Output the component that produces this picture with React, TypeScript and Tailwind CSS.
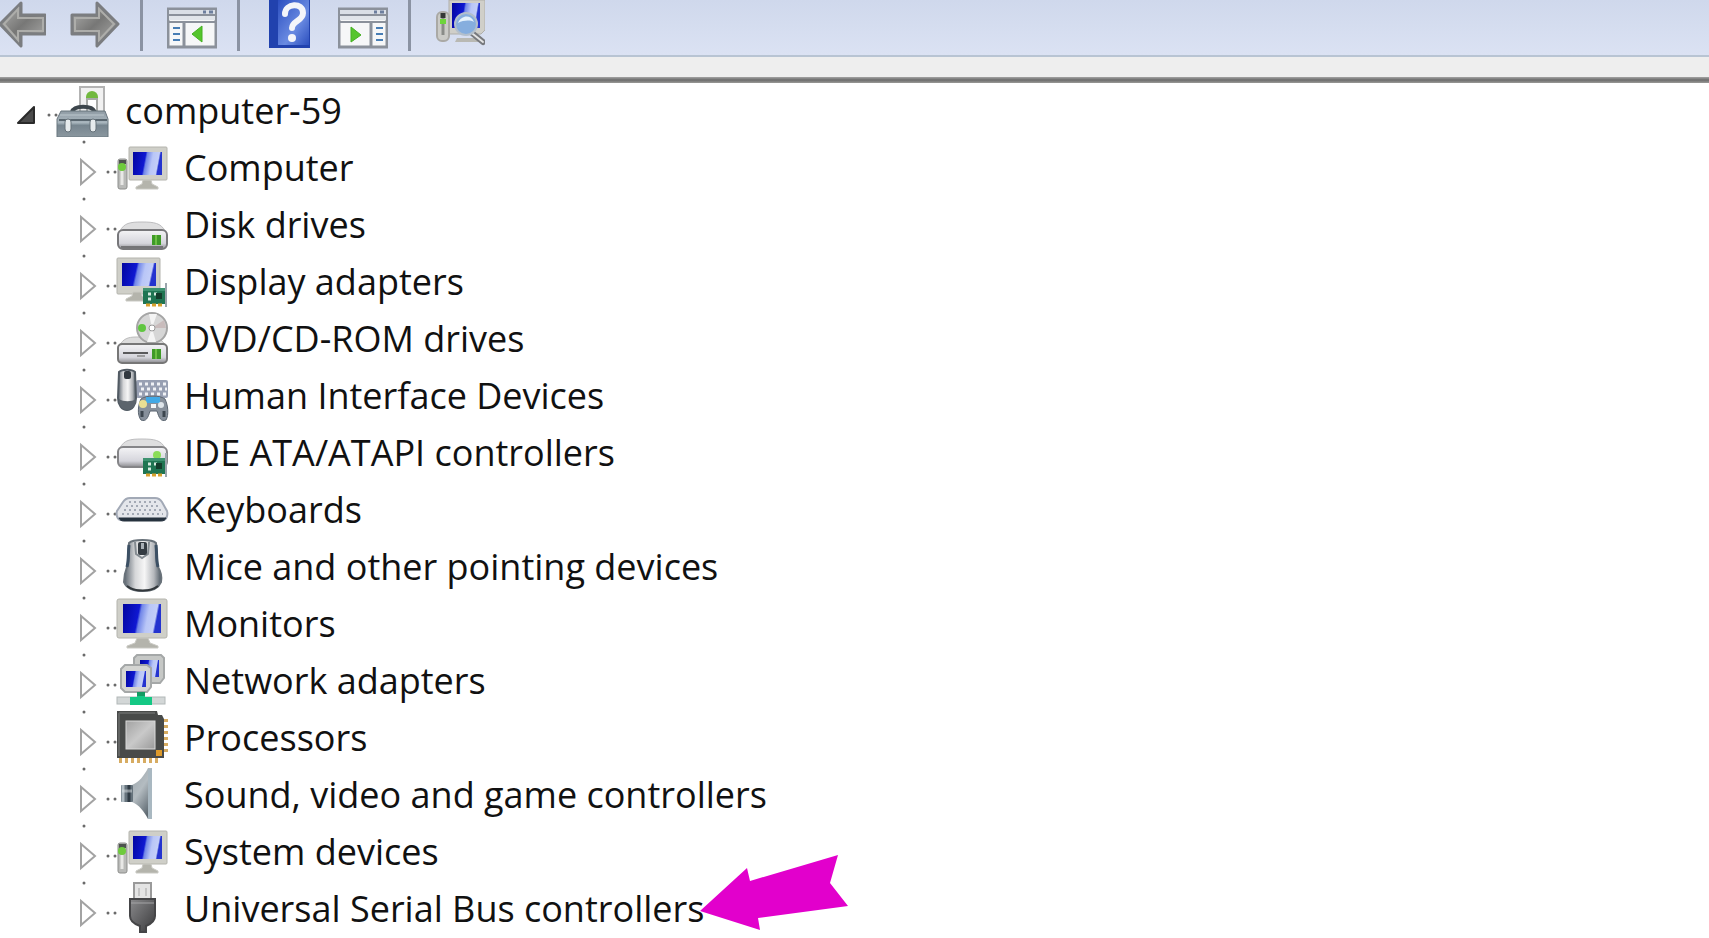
import { useState } from "react";
import type { ReactNode } from "react";

const Gradients = () => (
  <svg className="absolute h-0 w-0" aria-hidden="true">
    <defs>
      <linearGradient id="screen" x1="0" y1="0" x2="1" y2="0.15">
        <stop offset="0" stopColor="#0206a0" />
        <stop offset="0.44" stopColor="#0f18d2" />
        <stop offset="0.5" stopColor="#7186e8" />
        <stop offset="0.7" stopColor="#b9c6f7" />
        <stop offset="0.9" stopColor="#c3cef8" />
        <stop offset="0.95" stopColor="#2433cf" />
      </linearGradient>
      <linearGradient id="arrow" x1="0" y1="0" x2="1" y2="1">
        <stop offset="0" stopColor="#b5b5b3" />
        <stop offset="0.5" stopColor="#777776" />
        <stop offset="1" stopColor="#b0b0ae" />
      </linearGradient>
      <linearGradient id="steel" x1="0" y1="0" x2="0" y2="1">
        <stop offset="0" stopColor="#8f9ba4" />
        <stop offset="0.45" stopColor="#a9b6be" />
        <stop offset="0.55" stopColor="#76858f" />
        <stop offset="1" stopColor="#8b979f" />
      </linearGradient>
      <linearGradient id="drive" x1="0" y1="0" x2="0" y2="1">
        <stop offset="0" stopColor="#f4f4f6" />
        <stop offset="0.7" stopColor="#d5d5dc" />
        <stop offset="1" stopColor="#8c8c90" />
      </linearGradient>
      <linearGradient id="mouse" x1="0" y1="0" x2="1" y2="0">
        <stop offset="0" stopColor="#59636d" />
        <stop offset="0.3" stopColor="#d6d7d9" />
        <stop offset="0.55" stopColor="#f6f6f6" />
        <stop offset="0.8" stopColor="#b5b8bc" />
        <stop offset="1" stopColor="#4d5862" />
      </linearGradient>
      <linearGradient id="die" x1="0" y1="0" x2="1" y2="1">
        <stop offset="0" stopColor="#a2a2a2" />
        <stop offset="0.5" stopColor="#c9c9c9" />
        <stop offset="1" stopColor="#9a9a9a" />
      </linearGradient>
      <linearGradient id="cone" x1="0" y1="0" x2="0.6" y2="1">
        <stop offset="0" stopColor="#9aa4aa" />
        <stop offset="0.5" stopColor="#b4bcc1" />
        <stop offset="1" stopColor="#5f6a72" />
      </linearGradient>
      <linearGradient id="plug" x1="0" y1="0" x2="1" y2="1">
        <stop offset="0" stopColor="#8a8a8c" />
        <stop offset="1" stopColor="#3a3a3c" />
      </linearGradient>
      <linearGradient id="book" x1="0" y1="0" x2="1" y2="1">
        <stop offset="0" stopColor="#2c4fc0" />
        <stop offset="0.6" stopColor="#6a8be2" />
        <stop offset="1" stopColor="#2c4fbe" />
      </linearGradient>
    </defs>
  </svg>
);

const Icon = ({ children }: { children: ReactNode }) => (
  <svg viewBox="0 0 54 54" className="h-[54px] w-[54px] -mr-px shrink-0" aria-hidden="true">
    {children}
  </svg>
);

const Stand = ({ x, y }: { x: number; y: number }) => (
  <path
    d={`M${x - 4} ${y}h8l1 4 6 3v2h-22v-2l6-3z`}
    fill="#b4b4ac"
    stroke="#c9c9c3"
  />
);

const Board = ({ y }: { y: number }) => (
  <g>
    <path d={`M51 ${y - 5}v24`} stroke="#9aa5ac" strokeWidth="2" />
    <rect x="28" y={y} width="22" height="16" fill="#1f7552" />
    <rect x="28" y={y} width="22" height="3" fill="#3d9270" />
    <path d={`M33 ${y + 6}h3M33 ${y + 11}h3M39 ${y + 6}h3`} stroke="#d5eadf" strokeWidth="3" />
    <rect x="41" y={y + 5} width="6" height="6" fill="#143d2c" />
    <path d={`M31 ${y + 17}h16`} stroke="#d9a12e" strokeWidth="3" strokeDasharray="4 2" />
  </g>
);

const DeviceRootIcon = () => (
  <Icon>
    <rect x="24" y="4" width="24" height="26" fill="#f1f1f1" stroke="#b3b3b3" strokeWidth="2" />
    <path d="M30 14a6 6 0 0 1 12 0v2H30z" fill="#72b93f" />
    <path d="M31 16h10v14H31z" fill="#fff" stroke="#a8aaa8" strokeWidth="2" />
    <path d="M16 29c2-7 20-7 23 0" fill="none" stroke="#3d464c" strokeWidth="4" />
    <path d="M5 28h44l3 8v18H1V36z" fill="url(#steel)" stroke="#69767f" />
    <path d="M3 37h48" stroke="#59666f" strokeWidth="2" />
    <path d="M4 32h44" stroke="#bbc6cc" />
    <rect x="9" y="36" width="6" height="13" rx="3" fill="#e6ebed" stroke="#66727a" />
    <rect x="34" y="36" width="6" height="13" rx="3" fill="#e6ebed" stroke="#66727a" />
  </Icon>
);

const ComputerIcon = () => (
  <Icon>
    <rect x="3" y="19" width="9" height="30" rx="2" fill="#b9bab8" stroke="#8d8e8c" />
    <rect x="4" y="20" width="7" height="4" fill="#4d534e" />
    <ellipse cx="7" cy="27" rx="4" ry="4" fill="#6ecb3c" />
    <path d="M7 31v14" stroke="#e8e8e6" strokeWidth="3" />
    <rect x="14" y="7" width="38" height="33" rx="1" fill="#cfcfc8" stroke="#b4b4ad" />
    <rect x="18" y="12" width="29" height="23" fill="url(#screen)" />
    <Stand x={32} y={40} />
  </Icon>
);

const DiskIcon = () => (
  <Icon>
    <path d="M5 34c4-8 10-9 22-9s19 1 23 9z" fill="#dededf" stroke="#bdbdbf" />
    <rect x="3" y="33" width="49" height="19" rx="5" fill="url(#drive)" stroke="#77777a" strokeWidth="2" />
    <path d="M6 50h42" stroke="#747477" strokeWidth="2" />
    <rect x="37" y="38" width="9" height="10" fill="#3f9a27" />
    <path d="M41 38v10" stroke="#6cc043" strokeWidth="2" />
  </Icon>
);

const DisplayIcon = () => (
  <Icon>
    <rect x="2" y="4" width="43" height="36" rx="1" fill="#cfcfc8" stroke="#b4b4ad" />
    <rect x="7" y="9" width="34" height="23" fill="url(#screen)" />
    <Stand x={22} y={38} />
    <Board y={34} />
  </Icon>
);

const DvdIcon = () => (
  <Icon>
    <path d="M5 34c3-6 8-8 16-8h12c8 0 14 2 17 8z" fill="#dcdcdc" stroke="#bbb" />
    <circle cx="37" cy="17" r="15" fill="#d6d6d6" stroke="#a5a5a5" strokeWidth="2" />
    <path d="M37 17L34 3h8zM37 17l4 14h-9z" fill="#f4f4f4" />
    <path d="M37 17L49 9l2 8z" fill="#c9bcbc" />
    <circle cx="27" cy="17" r="4" fill="#60c640" />
    <circle cx="37" cy="17" r="3" fill="#fff" stroke="#999" />
    <rect x="3" y="33" width="49" height="19" rx="4" fill="url(#drive)" stroke="#777" strokeWidth="2" />
    <path d="M8 42h25" stroke="#5a5a5c" strokeWidth="2" />
    <path d="M22 45h8" stroke="#9c9c9e" strokeWidth="2" />
    <rect x="37" y="38" width="9" height="10" fill="#3f9a27" />
    <path d="M41 38v10" stroke="#6cc043" strokeWidth="2" />
  </Icon>
);

const HidIcon = () => (
  <Icon>
    <rect x="21" y="12" width="32" height="18" rx="2" fill="#98a0b3" />
    <path d="M24 16h27M26 21h26M24 26h27" stroke="#f0f2f6" strokeWidth="3" strokeDasharray="3 3" />
    <path d="M4 4c3-3 13-3 16 0l1 26c0 7-4 12-9 12S3 37 3 30z" fill="url(#mouse)" stroke="#515a63" strokeWidth="2" />
    <path d="M4 31c4 3 13 3 17 0 0 7-4 11-9 11s-8-4-8-11z" fill="#5c646c" />
    <rect x="9" y="3" width="7" height="8" rx="2" fill="#323940" />
    <path d="M26 31c5-4 19-4 24 0 3 6 4 16 1 21-5 2-7-2-9-9h-7c-2 7-4 11-9 9-4-5-3-15 0-21z" fill="#87909b" stroke="#5b6570" />
    <rect x="31" y="29" width="14" height="6" fill="#42a9e6" />
    <circle cx="28" cy="36" r="4" fill="#eadf93" />
    <circle cx="46" cy="37" r="3" fill="#dfe5ea" />
    <path d="M27 43v6M49 43v6" stroke="#3d464f" strokeWidth="3" />
    <path d="M36 38h5" stroke="#f4f6f7" strokeWidth="4" />
  </Icon>
);

const IdeIcon = () => (
  <Icon>
    <path d="M5 23c4-8 10-9 22-9s19 1 23 9z" fill="#dededf" stroke="#bdbdbf" />
    <rect x="3" y="22" width="49" height="20" rx="5" fill="url(#drive)" stroke="#858588" strokeWidth="2" />
    <circle cx="42" cy="30" r="4" fill="#8bdc58" />
    <Board y={33} />
  </Icon>
);

const KeyboardIcon = () => (
  <Icon>
    <path
      d="M15 16h25c3 0 5 1 7 4l5 9c1 3 0 9-4 9H6c-4 0-5-6-4-9l6-9c2-3 4-4 7-4z"
      fill="#e4e6eb"
      stroke="#a2a9b6"
      strokeWidth="2"
    />
    <path d="M14 20h28M11 24h33M9 28h38M7 32h41" stroke="#a3a9b5" strokeWidth="2" strokeDasharray="2 3" />
    <path d="M4 36h47c-1 2-2 3-5 3H9c-3 0-4-1-5-3z" fill="#26323f" stroke="#26323f" />
  </Icon>
);

const MouseIcon = () => (
  <Icon>
    <path
      d="M14 4c4-4 23-4 27 0 1 8-1 16 2 24 3 5 4 10 3 15-3 7-10 9-18 9S12 50 9 43c0-5 1-10 3-15 3-8 1-16 2-24z"
      fill="url(#mouse)"
      stroke="#69727a"
      strokeWidth="2"
    />
    <path d="M14 6c-1 8 0 14-2 22M41 6c1 8 0 14 2 22" stroke="#3c5064" strokeWidth="3" fill="none" />
    <path d="M20 3l1 12 6 4 6-4 1-12" fill="none" stroke="#848b91" strokeWidth="2" />
    <rect x="23" y="3" width="9" height="13" rx="2" fill="#343b42" />
    <rect x="26" y="4" width="3" height="6" fill="#a8afb5" />
    <path d="M12 47c7 6 24 6 31 0" stroke="#33383c" strokeWidth="2" fill="none" />
  </Icon>
);

const MonitorIcon = () => (
  <Icon>
    <rect x="2" y="3" width="50" height="39" rx="2" fill="#cfcfc8" stroke="#b4b4ad" />
    <rect x="8" y="8" width="38" height="29" fill="url(#screen)" />
    <path d="M22 42h11l2 5 8 3v2H12v-2l8-3z" fill="#b4b4ac" stroke="#c9c9c3" />
  </Icon>
);

const NetworkIcon = () => (
  <Icon>
    <path d="M22 2h24l3 3v20l-4 5H22l-3-4V5z" fill="#c6c8c6" stroke="#a5a8a8" strokeWidth="2" />
    <rect x="25" y="7" width="19" height="17" fill="url(#screen)" />
    <path d="M10 12h22l4 3v19l-4 5H10l-4-4V16z" fill="#d4d5d2" stroke="#a5a8a8" strokeWidth="2" />
    <rect x="11" y="18" width="20" height="16" fill="url(#screen)" />
    <rect x="2" y="44" width="48" height="7" fill="#d3d7d7" stroke="#b2b8b8" />
    <path d="M22 39h8v5h7v8H15v-8h7z" fill="#14c884" />
    <path d="M22 39h8v4h-8z" fill="#149a62" />
  </Icon>
);

const ProcessorIcon = () => (
  <Icon>
    <path d="M50 9v36" stroke="#d7ac62" strokeWidth="6" strokeDasharray="3 3" />
    <path d="M4 50h40" stroke="#d7ac62" strokeWidth="6" strokeDasharray="3 3" />
    <path d="M2 1h40l1 4h4l2 4v39H2z" fill="#484a49" />
    <path d="M4 3h36M4 3v43" stroke="#626463" strokeWidth="2" />
    <rect x="11" y="11" width="29" height="28" fill="url(#die)" stroke="#dadada" />
    <rect x="41" y="40" width="6" height="6" fill="#dd9a2b" />
  </Icon>
);

const SoundIcon = () => (
  <Icon>
    <path d="M17 18c7-3 12-9 16-17h4v51h-4c-4-8-9-14-16-17z" fill="url(#cone)" />
    <path d="M35 2v50" stroke="#a9b8c1" strokeWidth="4" />
    <rect x="6" y="18" width="12" height="17" rx="1" fill="#66737c" />
    <path d="M8 18v17" stroke="#b3bec5" strokeWidth="3" />
    <path d="M14 18v17" stroke="#2f3b44" strokeWidth="3" />
    <path d="M7 24h10" stroke="#dce2e5" strokeWidth="3" opacity="0.5" />
  </Icon>
);

const UsbIcon = () => (
  <Icon>
    <rect x="19" y="2" width="17" height="16" fill="#e4e4e4" stroke="#9a9a9a" strokeWidth="2" />
    <path d="M24 7v8M31 7v8" stroke="#c4c4c4" strokeWidth="2" />
    <path d="M15 18h25v17c0 5-4 8-9 10v6h-6v-6c-6-2-10-5-10-10z" fill="url(#plug)" stroke="#454547" strokeWidth="2" />
    <path d="M16 22h23" stroke="#a4a4a6" strokeWidth="1" />
  </Icon>
);

const ArrowIcon = ({ forward }: { forward?: boolean }) => (
  <svg viewBox="0 0 50 50" className="h-[50px] w-[50px]" aria-hidden="true">
    <path
      d={forward ? "M2 15h25V3l21 21-21 22V34H2z" : "M49 15H25V3L4 24l21 22V34h24z"}
      fill="url(#arrow)"
      stroke="#7b7d80"
      strokeWidth="3"
      strokeLinejoin="round"
    />
    <path
      d={forward ? "M5 18h24V9l15 15-15 16v-9H5z" : "M47 18H22V9L8 24l14 16v-9h25z"}
      fill="none"
      stroke="#adadaa"
      strokeWidth="2"
    />
  </svg>
);

const PanelIcon = ({ right }: { right?: boolean }) => (
  <svg viewBox="0 0 50 50" className="h-[50px] w-[50px]" aria-hidden="true">
    <rect x="1" y="9" width="48" height="38" fill="#f6f7f8" stroke="#8b919b" strokeWidth="3" />
    <path d="M2 12h46" stroke="#dadfe6" strokeWidth="4" />
    <path d="M2 15h46M2 22h46" stroke="#8b919b" strokeWidth="2" />
    <path d="M2 18h46" stroke="#e1e5ea" strokeWidth="4" />
    <path d="M36 12h3M42 12h4" stroke="#6d7f9e" strokeWidth="3" />
    {right ? (
      <g>
        <path d="M33 22v25" stroke="#8b919b" strokeWidth="3" />
        <path d="M38 28h7M38 34h7M38 40h7" stroke="#477db4" strokeWidth="2" />
        <path d="M13 27l10 8-10 7z" fill="#55c52c" stroke="#45b022" />
      </g>
    ) : (
      <g>
        <path d="M17 22v25" stroke="#8b919b" strokeWidth="3" />
        <path d="M6 28h7M6 34h7M6 40h7" stroke="#477db4" strokeWidth="2" />
        <path d="M35 26l-10 8 10 8z" fill="#55c52c" stroke="#45b022" />
      </g>
    )}
  </svg>
);

const HelpIcon = () => (
  <svg viewBox="0 0 50 50" className="h-[50px] w-[50px]" aria-hidden="true">
    <rect x="5" y="0" width="41" height="48" fill="#2142ae" />
    <rect x="14" y="0" width="31" height="45" fill="url(#book)" />
    <path
      d="M21 14c0-11 18-12 18-1 0 8-11 8-11 15"
      fill="none"
      stroke="#f4f5fa"
      strokeWidth="6"
      strokeLinecap="round"
    />
    <circle cx="28" cy="38" r="4" fill="#f4f5fa" />
  </svg>
);

const ScanIcon = () => (
  <svg viewBox="0 0 50 50" className="h-[50px] w-[50px]" aria-hidden="true">
    <path d="M14 0h36v30l-4 4H14z" fill="#d0cfc9" stroke="#b0afaa" />
    <rect x="17" y="3" width="28" height="25" fill="url(#screen)" />
    <path d="M22 38h22l4 4H20z" fill="#b9b9b3" />
    <rect x="2" y="12" width="12" height="29" rx="5" fill="#cbcbc7" stroke="#aaa9a5" strokeWidth="2" />
    <path d="M8 15v20" stroke="#8a8c88" strokeWidth="3" />
    <path d="M8 13v5" stroke="#343836" strokeWidth="5" />
    <path d="M8 19v5" stroke="#6ed53b" strokeWidth="6" />
    <path d="M37 33l11 9" stroke="#77797d" strokeWidth="6" strokeLinecap="round" />
    <path d="M38 34l10 8" stroke="#e4e4e4" strokeWidth="2" strokeLinecap="round" />
    <circle cx="31" cy="24" r="11" fill="#86aede" stroke="#b3bfcc" strokeWidth="2" />
    <path d="M23 23c3-8 13-9 16-1-4-2-10-2-16 1z" fill="#e5f2fc" />
  </svg>
);

const Divider = () => <span className="-ml-1 h-[51px] w-[3px] bg-[#8b93a3]" />;

const devices = [
  { name: "Computer", icon: ComputerIcon },
  { name: "Disk drives", icon: DiskIcon },
  { name: "Display adapters", icon: DisplayIcon },
  { name: "DVD/CD-ROM drives", icon: DvdIcon },
  { name: "Human Interface Devices", icon: HidIcon },
  { name: "IDE ATA/ATAPI controllers", icon: IdeIcon },
  { name: "Keyboards", icon: KeyboardIcon },
  { name: "Mice and other pointing devices", icon: MouseIcon },
  { name: "Monitors", icon: MonitorIcon },
  { name: "Network adapters", icon: NetworkIcon },
  { name: "Processors", icon: ProcessorIcon },
  { name: "Sound, video and game controllers", icon: SoundIcon },
  { name: "System devices", icon: ComputerIcon },
  { name: "Universal Serial Bus controllers", icon: UsbIcon, marked: true },
];

const Connector = () => (
  <svg viewBox="0 0 16 57" className="h-[57px] w-4 shrink-0 overflow-visible" aria-hidden="true">
    <circle cx="9" cy="32" r="1.5" fill="#6a6a6a" />
    <circle cx="16" cy="32" r="1.5" fill="#6a6a6a" />
  </svg>
);

const Pointer = () => (
  <svg
    viewBox="0 0 148 76"
    className="absolute left-full -top-[26px] -ml-1 h-[76px] w-[148px]"
    aria-hidden="true"
  >
    <path d="M0 56L47 13l3 13L138 0l-8 28 18 23-90 12 2 12z" fill="#e200cc" />
  </svg>
);

export default function App() {
  const [open, setOpen] = useState(true);

  return (
    <div className="min-h-screen overflow-hidden bg-white font-['Open_Sans','Noto_Sans',sans-serif] text-[#111]">
      <Gradients />

      {/* Toolbar */}
      <div
        role="toolbar"
        aria-label="Device Manager"
        className="flex h-[57px] items-start gap-6 border-b-2 border-[#b8c4d3] bg-linear-to-b from-[#cfd8ec] to-[#dbe2f3]"
      >
        <button type="button" aria-label="Back" className="-ml-1">
          <ArrowIcon />
        </button>
        <button type="button" aria-label="Forward">
          <ArrowIcon forward />
        </button>
        <Divider />
        <button type="button" aria-label="Show console tree">
          <PanelIcon />
        </button>
        <Divider />
        <button type="button" aria-label="Help">
          <HelpIcon />
        </button>
        <button type="button" aria-label="Show action pane">
          <PanelIcon right />
        </button>
        <Divider />
        <button type="button" aria-label="Scan for hardware changes">
          <ScanIcon />
        </button>
      </div>
      <div className="h-5 bg-[#eeeeee]" />
      <div className="h-1.5 bg-linear-to-b from-[#a5a5a5] via-[#6c6c6c] to-[#9a9a98]" />

      {/* Device tree */}
      <div className="flex h-[57px] items-start pl-4">
        <button
          type="button"
          aria-label="Toggle computer-59"
          aria-expanded={open}
          onClick={() => setOpen(!open)}
        >
          <svg viewBox="0 0 24 57" className="h-[57px] w-6" aria-hidden="true">
            <path d="M18 24v16H2z" fill="#4b4b4b" stroke="#2a2a2a" strokeWidth="2" strokeLinejoin="round" />
          </svg>
        </button>
        <Connector />
        <DeviceRootIcon />
        <span className="ml-4 text-4xl/[56px] whitespace-nowrap">computer-59</span>
      </div>

      {open && (
        <ul>
          {devices.map(({ name, icon: DeviceIcon, marked }) => (
            <li key={name} className="flex h-[57px] items-start pl-[75px]">
              <button type="button" aria-label={`Expand ${name}`}>
                <svg viewBox="0 0 24 57" className="h-[57px] w-6" aria-hidden="true">
                  <circle cx="9" cy="2" r="1.5" fill="#6a6a6a" />
                  <path d="M6 20v24l14-12z" fill="#fff" stroke="#a3a3a3" strokeWidth="2" />
                </svg>
              </button>
              <Connector />
              <DeviceIcon />
              <span className="relative ml-4 text-4xl/[56px] whitespace-nowrap">
                {name}
                {marked && <Pointer />}
              </span>
            </li>
          ))}
        </ul>
      )}
    </div>
  );
}
